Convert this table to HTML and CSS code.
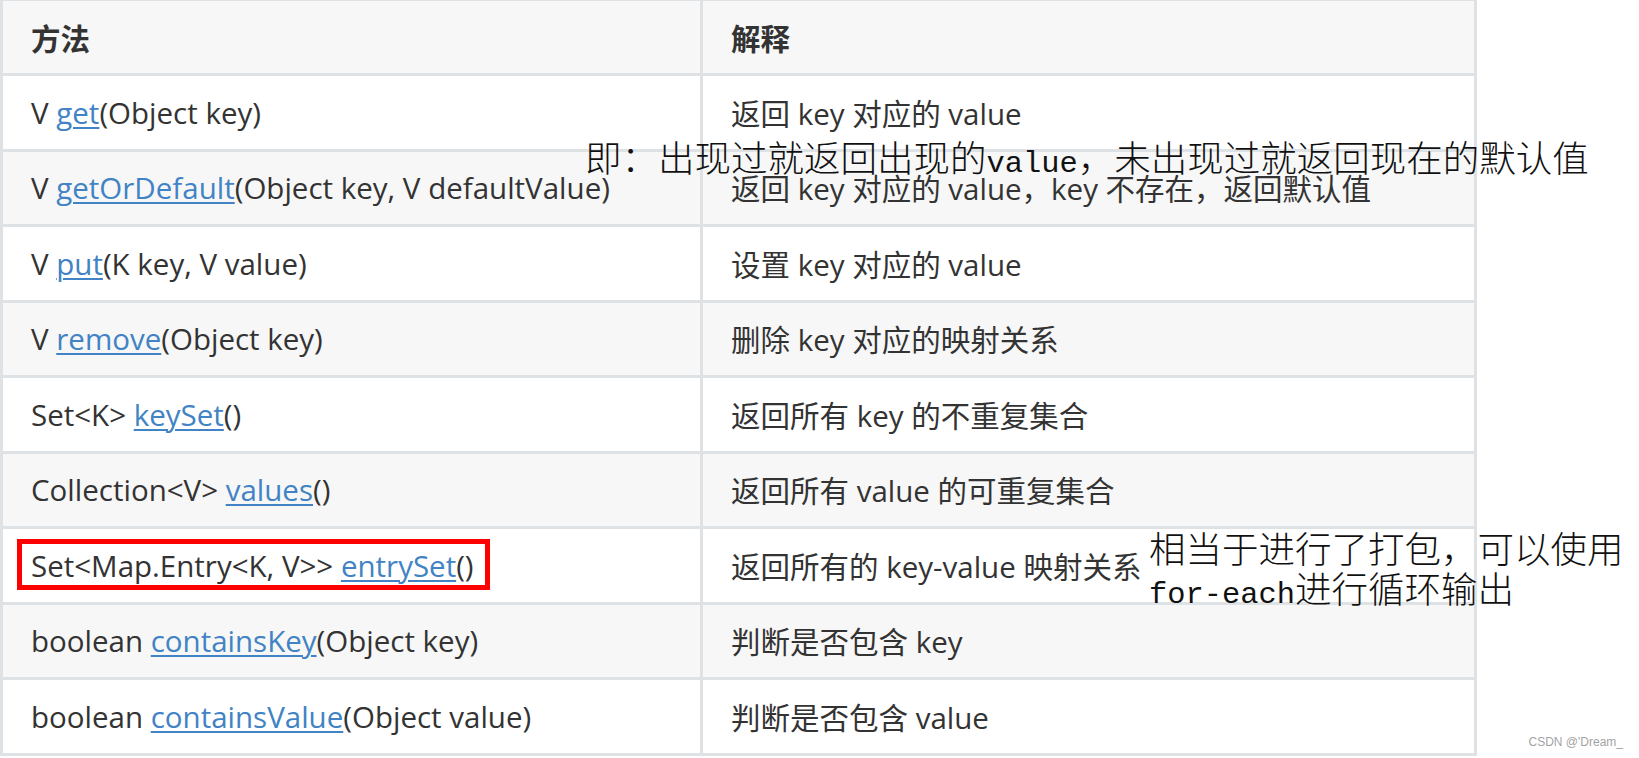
FILE: index.html
```html
<!DOCTYPE html>
<html lang="zh-CN">
<head>
<meta charset="utf-8">
<title>Map 方法</title>
<link rel="stylesheet" href="styles.css">
</head>
<body>
<div class="page">
  <div class="table">
    <div class="row head">
      <div class="cell">方法</div>
      <div class="cell">解释</div>
    </div>
    <div class="row">
      <div class="cell">V&nbsp;<a>get</a>(Object key)</div>
      <div class="cell">返回 key 对应的 value</div>
    </div>
    <div class="row alt">
      <div class="cell">V&nbsp;<a>getOrDefault</a>(Object key, V defaultValue)</div>
      <div class="cell">返回 key 对应的 value，key 不存在，返回默认值</div>
    </div>
    <div class="row">
      <div class="cell">V&nbsp;<a>put</a>(K key, V value)</div>
      <div class="cell">设置 key 对应的 value</div>
    </div>
    <div class="row alt">
      <div class="cell">V&nbsp;<a>remove</a>(Object key)</div>
      <div class="cell">删除 key 对应的映射关系</div>
    </div>
    <div class="row">
      <div class="cell">Set&lt;K&gt;&nbsp;<a>keySet</a>()</div>
      <div class="cell">返回所有 key 的不重复集合</div>
    </div>
    <div class="row alt">
      <div class="cell">Collection&lt;V&gt;&nbsp;<a>values</a>()</div>
      <div class="cell">返回所有 value 的可重复集合</div>
    </div>
    <div class="row">
      <div class="cell">Set&lt;Map.Entry&lt;K, V&gt;&gt;&nbsp;<a>entrySet</a>()</div>
      <div class="cell">返回所有的 key-value 映射关系</div>
    </div>
    <div class="row alt">
      <div class="cell">boolean&nbsp;<a>containsKey</a>(Object key)</div>
      <div class="cell">判断是否包含 key</div>
    </div>
    <div class="row">
      <div class="cell">boolean&nbsp;<a>containsValue</a>(Object value)</div>
      <div class="cell">判断是否包含 value</div>
    </div>
  </div>

  <div class="note note-one">即：出现过就返回出现的<span class="en">value</span>，未出现过就返回现在的默认值</div>
  <div class="mark-box"></div>
  <div class="note note-two">相当于进行了打包，可以使用<br><span class="en">for-each</span>进行循环输出</div>
  <div class="watermark">CSDN @'Dream_</div>
</div>
</body>
</html>
```

FILE: styles.css
```css
html, body {
  margin: 0;
  padding: 0;
  background: #ffffff;
}

body {
  overflow: hidden;
}

.page {
  position: relative;
  width: 1639px;
  height: 758px;
  font-family: "Open Sans", "Noto Sans CJK SC", sans-serif;
}

.table {
  display: flex;
  flex-direction: column;
  gap: 3px;
  width: 1471px;
  padding: 1px 3px 3px 3px;
  background: #dfe2e5;
}

.row {
  display: grid;
  grid-template-columns: 697px 771px;
  column-gap: 3px;
  height: 72.5px;
}

.row.head {
  height: 72px;
}

.cell {
  display: flex;
  align-items: center;
  padding-left: 28px;
  background: #ffffff;
  color: #333333;
  font-size: 29.5px;
  white-space: nowrap;
}

.row.head .cell,
.row.alt .cell {
  background: #f7f7f7;
}

.row.head .cell {
  font-weight: 700;
}

.cell a {
  color: #4183c4;
  text-decoration: underline;
  text-decoration-thickness: 2px;
  text-underline-offset: 3px;
}

.note {
  position: absolute;
  font-family: "Noto Sans CJK SC", sans-serif;
  font-weight: 300;
  font-size: 36.5px;
  line-height: 40px;
  color: #111111;
  white-space: nowrap;
}

.note .en {
  font-family: "Liberation Mono", monospace;
  font-weight: 400;
  font-size: 30.4px;
}

.note-one {
  left: 585px;
  top: 137px;
}

.note-two {
  left: 1149px;
  top: 528px;
}

.mark-box {
  position: absolute;
  left: 17px;
  top: 539px;
  width: 463px;
  height: 41px;
  border: 5px solid #ff0000;
}

.watermark {
  position: absolute;
  right: 16px;
  top: 736px;
  font-family: "Liberation Sans", Arial, sans-serif;
  font-size: 12px;
  line-height: 13px;
  color: #a3a3a3;
}
```
